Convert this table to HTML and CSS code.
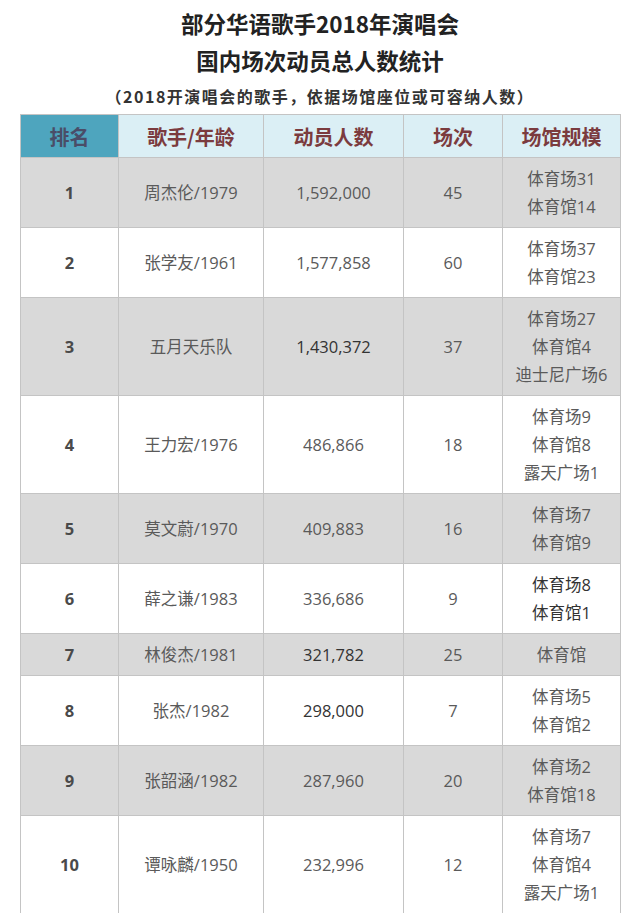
FILE: index.html
```html
<!DOCTYPE html>
<html lang="zh-CN">
<head>
<meta charset="utf-8">
<title>部分华语歌手2018年演唱会国内场次动员总人数统计</title>
<link rel="stylesheet" href="styles.css">
</head>
<body>
<div class="page">
  <h1 class="title">部分华语歌手2018年演唱会<br>国内场次动员总人数统计</h1>
  <p class="subtitle">（2018开演唱会的歌手，依据场馆座位或可容纳人数）</p>
  <table class="stats">
    <colgroup>
      <col class="c1"><col class="c2"><col class="c3"><col class="c4"><col class="c5">
    </colgroup>
    <thead>
      <tr>
        <th class="rank-h">排名</th>
        <th>歌手/年龄</th>
        <th>动员人数</th>
        <th>场次</th>
        <th>场馆规模</th>
      </tr>
    </thead>
    <tbody>
      <tr class="gray"><td class="rank">1</td><td>周杰伦/1979</td><td>1,592,000</td><td>45</td><td>体育场31<br>体育馆14</td></tr>
      <tr><td class="rank">2</td><td>张学友/1961</td><td>1,577,858</td><td>60</td><td>体育场37<br>体育馆23</td></tr>
      <tr class="gray"><td class="rank">3</td><td>五月天乐队</td><td class="dark">1,430,372</td><td>37</td><td>体育场27<br>体育馆4<br>迪士尼广场6</td></tr>
      <tr><td class="rank">4</td><td>王力宏/1976</td><td>486,866</td><td>18</td><td>体育场9<br>体育馆8<br>露天广场1</td></tr>
      <tr class="gray"><td class="rank">5</td><td>莫文蔚/1970</td><td>409,883</td><td>16</td><td>体育场7<br>体育馆9</td></tr>
      <tr><td class="rank">6</td><td>薛之谦/1983</td><td>336,686</td><td>9</td><td class="dark">体育场8<br>体育馆1</td></tr>
      <tr class="gray"><td class="rank">7</td><td>林俊杰/1981</td><td class="dark">321,782</td><td>25</td><td>体育馆</td></tr>
      <tr><td class="rank">8</td><td>张杰/1982</td><td class="dark">298,000</td><td>7</td><td>体育场5<br>体育馆2</td></tr>
      <tr class="gray"><td class="rank">9</td><td>张韶涵/1982</td><td>287,960</td><td>20</td><td>体育场2<br>体育馆18</td></tr>
      <tr><td class="rank">10</td><td>谭咏麟/1950</td><td>232,996</td><td>12</td><td>体育场7<br>体育馆4<br>露天广场1</td></tr>
    </tbody>
  </table>
</div>
</body>
</html>
```
FILE: styles.css
```css
html, body {
  margin: 0;
  padding: 0;
  background: #ffffff;
}
body {
  font-family: "Open Sans", "Noto Sans CJK SC", sans-serif;
  color: #555555;
}
.page {
  padding: 5px 0 0 20px;
  width: 600px;
}
.title {
  margin: 0;
  text-align: center;
  font-family: "Noto Sans CJK SC", sans-serif;
  font-size: 22.5px;
  font-weight: 700;
  line-height: 37px;
  color: #222222;
}
.subtitle {
  margin: 0;
  text-align: center;
  font-family: "Noto Sans CJK SC", sans-serif;
  font-size: 16px;
  font-weight: 700;
  line-height: 35px;
  letter-spacing: 1.5px;
  color: #333333;
}
.stats {
  margin-top: 0;
  width: 600px;
  border-collapse: collapse;
  table-layout: fixed;
}
.c1 { width: 98px; }
.c2 { width: 145px; }
.c3 { width: 140px; }
.c4 { width: 99px; }
.c5 { width: 118px; }
.stats th,
.stats td {
  border: 1px solid #c4c4c4;
  text-align: center;
  vertical-align: middle;
  padding: 6.5px 0;
  font-size: 16.5px;
  line-height: 28px;
}
.stats th {
  background: #dbeff5;
  color: #7b3b3e;
  font-family: "Noto Sans CJK SC", sans-serif;
  font-size: 20px;
  font-weight: 700;
  line-height: 29px;
}
.stats th.rank-h {
  background: #4ea5be;
  color: #4a4d68;
}
.stats td {
  color: #5a5a5a;
}
.stats tr.gray td {
  background: #d9d9d9;
}
.stats td.rank {
  font-weight: 700;
  color: #4a4a4a;
}
.stats td.dark {
  color: #333333;
}
```
